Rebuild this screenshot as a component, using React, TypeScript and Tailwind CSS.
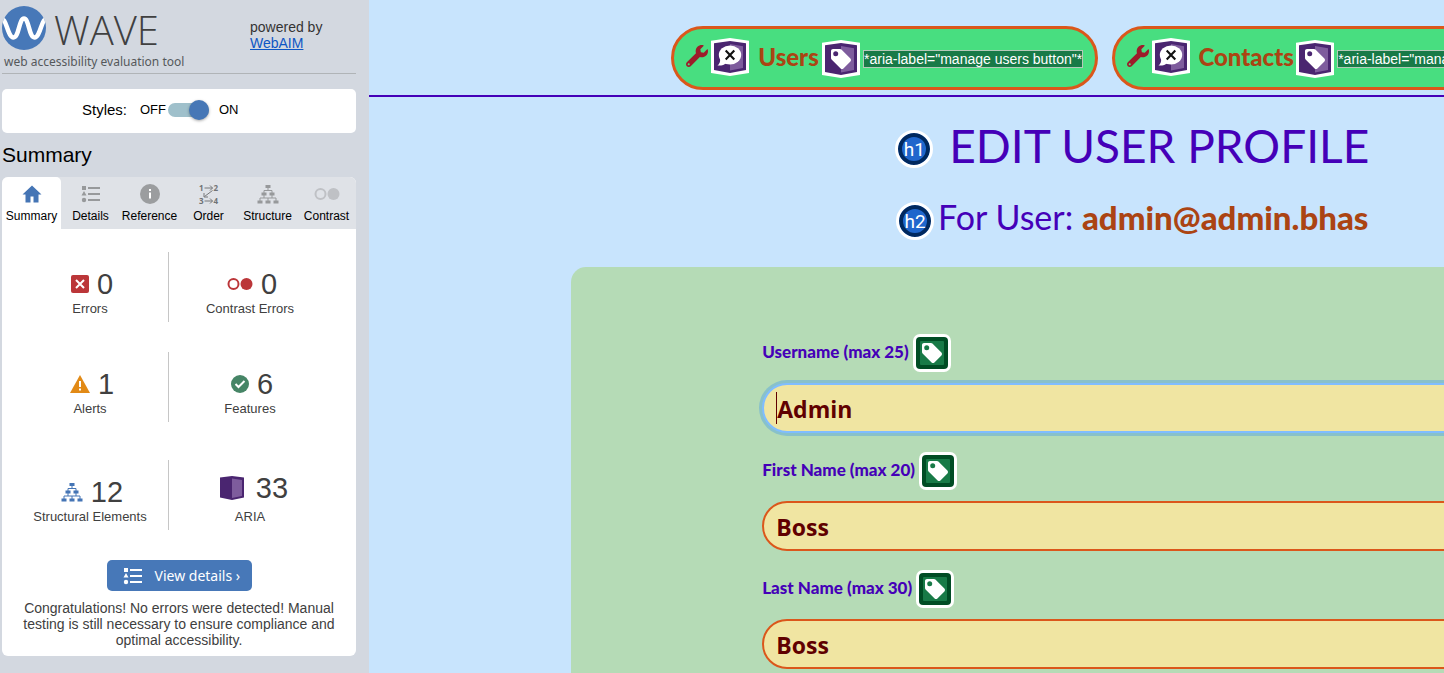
import React from "react";
import { FaWrench } from "react-icons/fa";

const TAG =
  "M21.41 11.58l-9-9C12.05 2.22 11.55 2 11 2H4c-1.1 0-2 .9-2 2v7c0 .55.22 1.05.59 1.42l9 9c.36.36.86.58 1.41.58s1.05-.22 1.41-.59l7-7c.37-.36.59-.86.59-1.41s-.23-1.06-.59-1.42z";

function HexBase() {
  return (
    <>
      <path d="M0 2.7 19 0l19 2.7V35l-19 3L0 35z" fill="#fff" />
      <path d="M3 5.3 19 3l16 2.3V32l-16 3L3 32z" fill="#4a2570" />
      <path d="M19 6l13 2.2V30l-13 2.4z" fill="#7e5c9d" />
    </>
  );
}

function AriaHidden() {
  return (
    <svg viewBox="0 0 38 38" className="mb-0.5 size-[38px] shrink-0" aria-hidden="true">
      <HexBase />
      <ellipse cx="19" cy="17" rx="11.2" ry="9.4" fill="#fff" />
      <path d="M9 20.5C9.6 23.500 8.500 26 6.500 27.500c3.500.4 7-.6 9-2.500z" fill="#fff" />
      <path d="M14.700 12.500l8.600 9M23.300 12.500l-8.600 9" stroke="#111" strokeWidth="2.100" />
    </svg>
  );
}

function AriaTag() {
  return (
    <svg viewBox="0 0 38 38" className="mt-0.5 size-[38px] shrink-0" aria-hidden="true">
      <HexBase />
      <path d={TAG} transform="translate(7 7)" fill="#fff" />
      <circle cx="13.700" cy="13.700" r="2.500" fill="#4a2570" />
    </svg>
  );
}

function LabelTag() {
  return (
    <svg viewBox="0 0 38 38" className="size-[38px] shrink-0" aria-hidden="true">
      <rect width="38" height="38" rx="7" fill="#fff" />
      <rect x="3" y="3" width="32" height="32" rx="4" fill="#004c24" />
      <rect x="7" y="7" width="24" height="24" rx="1" fill="#187a47" />
      <path d={TAG} transform="translate(7 7)" fill="#fff" />
      <circle cx="13.700" cy="13.700" r="2.500" fill="#187a47" />
    </svg>
  );
}

function HeadingBadge({ children }: { children: string }) {
  return (
    <span className="mt-1 flex size-[38px] shrink-0 items-center justify-center rounded-full border-[3px] border-white bg-[#1f66cc] font-[Roboto,sans-serif] text-[19px] leading-none font-normal text-white ring-4 ring-[#00285e] ring-inset">
      {children}
    </span>
  );
}

function Logo() {
  return (
    <svg viewBox="0 0 44 44" className="size-11 shrink-0" aria-hidden="true">
      <clipPath id="disc">
        <circle cx="22" cy="22" r="22" />
      </clipPath>
      <circle cx="22" cy="22" r="22" fill="#4778b8" />
      <path
        clipPath="url(#disc)"
        d="M.5 13C4.500 14 6 31.500 11.500 31.500S17 12.500 22 12.500 27 31.500 32.500 31.500 39.500 14 43.500 13"
        fill="none"
        stroke="#fff"
        strokeWidth="4.500"
      />
    </svg>
  );
}

function ListIcon({ className }: { className: string }) {
  return (
    <svg viewBox="0 0 20 18" className={className} fill="currentColor" aria-hidden="true">
      <path d="M1 1h4v4H1zM3 6l2.500 4.500h-5zM7 2h12v2H7zM7 8h12v2H7zM7 14h12v2H7z" />
      <circle cx="3" cy="15" r="2.200" />
    </svg>
  );
}

function TreeIcon({ className }: { className: string }) {
  return (
    <svg viewBox="0 0 22 20" className={className} aria-hidden="true">
      <path
        d="M8.500 1h5v3h-5zM4.500 8.500h5v3h-5zM12.500 8.500h5v3h-5zM.5 16.500h5v3h-5zM8.500 16.500h5v3h-5zM16.500 16.500h5v3h-5z"
        fill="currentColor"
      />
      <path
        d="M11 4v2.500M7 9V6.500h8V9M7 11v3M15 11v3M3 17v-3h16v3M11 14v3"
        fill="none"
        stroke="currentColor"
        strokeWidth="1"
      />
    </svg>
  );
}

function ContrastIcon({ className }: { className: string }) {
  return (
    <svg viewBox="0 0 26 14" className={className} aria-hidden="true">
      <circle cx="6.500" cy="7" r="5" fill="none" stroke="currentColor" strokeWidth="2" />
      <circle cx="19.500" cy="7" r="6" fill="currentColor" />
    </svg>
  );
}

function OrderIcon() {
  return (
    <svg viewBox="0 0 20 20" className="size-5 overflow-visible" aria-hidden="true">
      <g fill="#707375" fontFamily="Open Sans, sans-serif" fontSize="8" fontWeight="700">
        <text x="0" y="7">1</text>
        <text x="14.500" y="7">2</text>
        <text x="0" y="20">3</text>
        <text x="14.500" y="20">4</text>
      </g>
      <path
        d="M5.500 4h8M11 1.500 13.500 4 11 6.500M5.500 17h8M11 14.500l2.500 2.500-2.500 2.500M13.500 6.500 5.500 12.500M5 9v4h4"
        fill="none"
        stroke="#77797b"
      />
    </svg>
  );
}

const tabs = [
  {
    name: "Summary",
    icon: (
      <svg viewBox="0 0 20 18" className="h-[18px] w-5 text-[#4575b5]" aria-hidden="true">
        <path d="M10 .5.500 9.500h3v8h5v-6h3v6h5v-8h3z" fill="currentColor" />
      </svg>
    ),
  },
  { name: "Details", icon: <ListIcon className="h-[18px] w-5 text-[#97999b]" /> },
  {
    name: "Reference",
    icon: (
      <svg viewBox="0 0 20 20" className="size-5" aria-hidden="true">
        <circle cx="10" cy="10" r="10" fill="#9b9d9f" />
        <path d="M9 5h2v2H9zM9 8.500h2v6H9z" fill="#fff" />
      </svg>
    ),
  },
  { name: "Order", icon: <OrderIcon /> },
  { name: "Structure", icon: <TreeIcon className="h-5 w-[22px] text-[#97999b]" /> },
  { name: "Contrast", icon: <ContrastIcon className="h-[14px] w-[26px] text-[#bfc1c5]" /> },
];

type StatItem = { name: string; count: number; icon: React.ReactNode; tall?: boolean };

const stats: StatItem[] = [
  {
    name: "Errors",
    count: 0,
    icon: (
      <svg viewBox="0 0 18 18" className="size-[18px]" aria-hidden="true">
        <rect width="18" height="18" rx="2" fill="#bb3639" />
        <path d="M5 5l8 8M13 5l-8 8" stroke="#fff" strokeWidth="2" />
      </svg>
    ),
  },
  {
    name: "Contrast Errors",
    count: 0,
    icon: <ContrastIcon className="h-[14px] w-[26px] text-[#bb3639]" />,
  },
  {
    name: "Alerts",
    count: 1,
    icon: (
      <svg viewBox="0 0 20 18" className="h-[18px] w-5" aria-hidden="true">
        <path d="M10 0l10 18H0z" fill="#e28a16" />
        <path d="M9 6h2v6H9zM9 13.500h2v2H9z" fill="#fff" />
      </svg>
    ),
  },
  {
    name: "Features",
    count: 6,
    icon: (
      <svg viewBox="0 0 18 18" className="size-[18px]" aria-hidden="true">
        <circle cx="9" cy="9" r="9" fill="#468566" />
        <path d="M4.500 9l3 3L13.500 6" fill="none" stroke="#fff" strokeWidth="2" />
      </svg>
    ),
  },
  {
    name: "Structural Elements",
    count: 12,
    icon: <TreeIcon className="h-5 w-[22px] text-[#4575b5]" />,
  },
  {
    name: "ARIA",
    count: 33,
    tall: true,
    icon: (
      <svg viewBox="0 0 24 24" className="mr-1 size-6" aria-hidden="true">
        <path d="M0 1.500 12 0l12 1.500v20L12 24 0 21.500z" fill="#4a2570" />
        <path d="M12 2.500l10 1.500v16l-10 2z" fill="#7e5c9d" />
      </svg>
    ),
  },
];

function Stat({ item, divided }: { item: StatItem; divided: boolean }) {
  return (
    <li
      className={
        divided
          ? "flex h-[70px] flex-col items-center border-r border-[#c6c6c6] pt-[15px]"
          : "flex h-[70px] flex-col items-center pt-[15px]"
      }
    >
      <div
        className={item.tall ? "flex h-[34px] items-center gap-2 pb-2 pl-2" : "flex h-[34px] items-center gap-2 pl-1"}
      >
        {item.icon}
        <span className="text-[29px] leading-[34px]">{item.count}</span>
      </div>
      <span className="text-[13px] leading-4">{item.name}</span>
    </li>
  );
}

function Sidebar() {
  return (
    <aside className="w-[369px] shrink-0 bg-[#d3d8e0] pr-[13px] pl-0.5 font-['Liberation_Sans',Arial,sans-serif] text-[#404040]">
      <header className="flex h-[74px] border-b border-[#b0b4b7] pt-1.5">
        <div className="w-[248px]">
          <div className="flex items-center gap-2">
            <Logo />
            <span className="pt-1 font-['Open_Sans',sans-serif] text-[40px] leading-10 font-light">WAVE</span>
          </div>
          <p className="pl-0.5 font-['Noto_Sans',sans-serif] text-xs leading-6 text-[#55585b]">
            web accessibility evaluation tool
          </p>
        </div>
        <p className="pt-[13px] text-sm leading-4 text-[#333]">
          powered by
          <br />
          <a href="#webaim" className="text-[#0d56c4] underline">
            WebAIM
          </a>
        </p>
      </header>

      <div className="mt-[15px] flex h-11 items-center rounded-[5px] bg-white pb-0.5 pl-20 text-black">
        <span className="w-[58px] text-[15px]">Styles:</span>
        <label className="flex items-center text-[13px]">
          <span className="w-7">OFF</span>
          <input type="checkbox" role="switch" defaultChecked className="peer sr-only" aria-label="Styles" />
          <span className="mr-2.5 flex h-3.5 w-[41px] items-center justify-end rounded-full bg-[#9fc0cb]">
            <span className="size-5 shrink-0 rounded-full bg-[#4677b6] shadow-[0_1px_3px_rgba(0,0,0,0.35)]" />
          </span>
          ON
        </label>
      </div>

      <h2 className="mt-2.5 mb-[10px] text-[21px] leading-6 text-black">Summary</h2>

      <div className="overflow-hidden rounded-md bg-white">
        <div className="grid h-[52px] grid-cols-6 bg-[#dfe2e7]" role="tablist">
          {tabs.map((tab, i) => (
            <button
              key={tab.name}
              type="button"
              role="tab"
              aria-selected={i === 0}
              className="flex flex-col items-center rounded-t-[5px] pt-1.5 text-xs leading-4 whitespace-nowrap text-black aria-selected:bg-white"
            >
              <span className="mb-[3px] flex h-[22px] items-center">{tab.icon}</span>
              {tab.name}
            </button>
          ))}
        </div>
        <ul className="mt-[23px] grid grid-cols-[157px_162px] gap-y-[30px] pl-2.5">
          {stats.slice(0, 4).map((s, i) => (
            <Stat key={s.name} item={s} divided={i % 2 === 0} />
          ))}
        </ul>
        <ul className="mt-[38px] grid grid-cols-[157px_162px] pl-2.5">
          {stats.slice(4).map((s, i) => (
            <Stat key={s.name} item={s} divided={i % 2 === 0} />
          ))}
        </ul>
        <button
          type="button"
          className="mx-auto mt-[30px] flex h-[31px] w-[145px] items-center gap-3 rounded-[5px] bg-[#4778b8] pl-4 font-['Noto_Sans',sans-serif] text-sm whitespace-nowrap text-white"
        >
          <ListIcon className="h-[18px] w-5 shrink-0" />
          View details ›
        </button>
        <p className="mt-[9px] mb-2 px-4 text-center text-sm leading-4">
          Congratulations! No errors were detected! Manual testing is still necessary to ensure compliance and optimal
          accessibility.
        </p>
      </div>
    </aside>
  );
}

function NavButton({ label, aria, width }: { label: string; aria: string; width: string }) {
  return (
    <button
      type="button"
      className="flex h-16 items-center rounded-full border-[3px] border-[#db571b] bg-[#48de80] px-3 whitespace-nowrap"
    >
      <FaWrench className="mr-[3px] mb-1 size-[22px] text-[#9d1c2a]" aria-hidden="true" />
      <AriaHidden />
      <span className={`${width} pb-0.5 text-center text-2xl leading-8 font-black text-[#ab4413]`}>{label}</span>
      <AriaTag />
      <span className="mt-0.5 ml-[3px] border border-[#b5c9b9] bg-[#187a47] font-['Liberation_Sans',Arial,sans-serif] text-sm leading-4 text-white">
        *aria-label="{aria}"*
      </span>
    </button>
  );
}

function Field({ id, label, value, focused }: { id: string; label: string; value: string; focused?: boolean }) {
  return (
    <div className="mb-[19px]">
      <div className="mb-[11px] flex items-center gap-1">
        <label htmlFor={id} className="pb-0.5 text-[17px] leading-6 font-black whitespace-nowrap text-[#4500b8]">
          {label}
        </label>
        <LabelTag />
      </div>
      <div
        className={
          focused
            ? "flex h-[50px] items-center rounded-full border-2 border-[#80bdff] bg-[#f0e5a2] pl-3 ring-3 ring-[#88c1ca]"
            : "flex h-[50px] items-center rounded-full border-2 border-[#db571b] bg-[#f0e5a2] pl-3"
        }
      >
        {focused && <span className="h-8 w-px bg-[#600000]" />}
        <input
          id={id}
          defaultValue={value}
          className="w-full bg-transparent pt-0.5 font-['Open_Sans',sans-serif] text-[23px] leading-9 font-bold text-[#600000] outline-none"
        />
      </div>
    </div>
  );
}

export default function App() {
  return (
    <div className="flex h-screen overflow-hidden">
      <Sidebar />
      <main className="min-w-0 flex-1 overflow-hidden bg-[#c8e4fd] font-[Lato,sans-serif]">
        <div className="w-[142%]">
          <nav className="flex h-[97px] gap-3.5 border-b-2 border-[#4500b8] pt-[26px] pl-[302px]">
            <NavButton label="Users" aria="manage users button" width="w-[73px] pl-1.5" />
            <NavButton label="Contacts" aria="manage contacts button" width="w-[106px] pl-1.5" />
          </nav>
          <h1 className="mt-[26px] flex h-12 items-center justify-center gap-4 text-[46px] leading-[48px] whitespace-nowrap text-[#4500b8]">
            <HeadingBadge>h1</HeadingBadge>
            <span className="pb-0.5">EDIT USER PROFILE</span>
          </h1>
          <h2 className="mt-7 flex h-10 items-center justify-center gap-1 text-[34px] leading-10 whitespace-nowrap text-[#4500b8]">
            <HeadingBadge>h2</HeadingBadge>
            <span className="pb-1">
              For User: <strong className="text-[33px] font-black text-[#ab4413]">admin@admin.bhas</strong>
            </span>
          </h2>
          <form className="mx-auto mt-7 w-[1122px] rounded-[15px] bg-[#b5dbb6] px-[191px] pt-[67px] pb-16">
            <Field id="username" label="Username (max 25)" value="Admin" focused />
            <Field id="first" label="First Name (max 20)" value="Boss" />
            <Field id="last" label="Last Name (max 30)" value="Boss" />
          </form>
        </div>
      </main>
    </div>
  );
}
